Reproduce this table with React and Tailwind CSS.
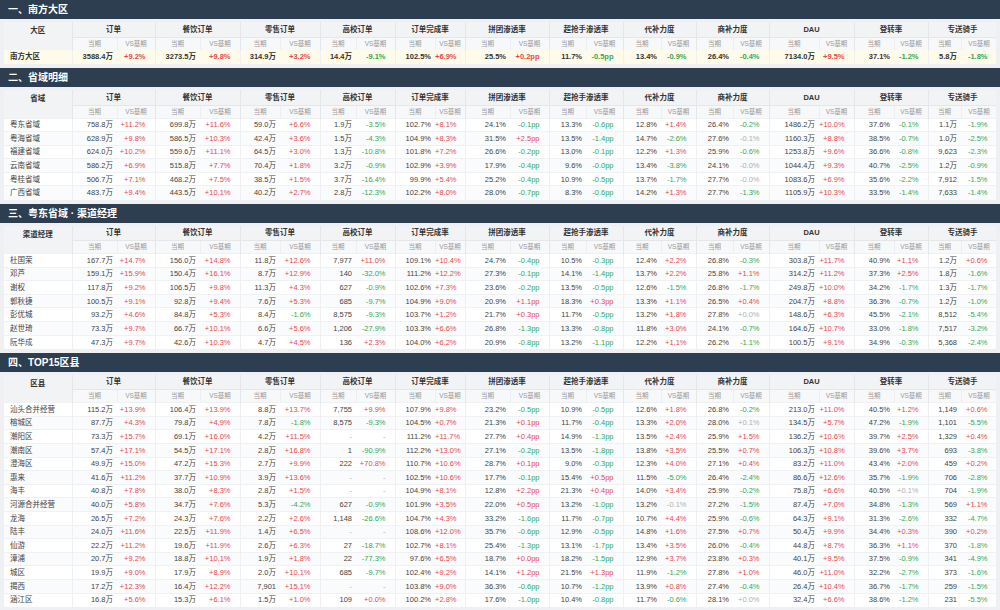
import React from 'react';

const GROUPS = [
  ['订单', 45, 38],
  ['餐饮订单', 45, 40],
  ['零售订单', 40, 40],
  ['高校订单', 36, 39],
  ['订单完成率', 40, 30],
  ['拼团渗透率', 45, 39],
  ['超抢手渗透率', 37, 37],
  ['代补力度', 38, 35],
  ['商补力度', 37, 36],
  ['DAU', 50, 35],
  ['登转率', 40, 34],
  ['专送骑手', 33, 36],
];

const parse = (s) => s.trim().split(/\s+/);

const REGION = [
  ['南方大区', parse('3588.4万 +9.2% 3273.5万 +9.8% 314.9万 +3.2% 14.4万 -9.1% 102.5% +6.9% 25.5% +0.2pp 11.7% -0.5pp 13.4% -0.9% 26.4% -0.4% 7134.0万 +9.5% 37.1% -1.2% 5.8万 -1.8%')],
];

const PROVINCES = [
  ['粤东省域', parse('758.8万 +11.2% 699.8万 +11.6% 59.0万 +6.6% 1.9万 -3.5% 102.7% +8.1% 24.1% -0.1pp 13.3% -0.6pp 12.8% +1.4% 26.4% -0.2% 1486.2万 +10.0% 37.6% -0.1% 1.1万 -1.9%')],
  ['粤海省域', parse('628.9万 +9.8% 586.5万 +10.3% 42.4万 +3.6% 1.5万 -4.3% 104.9% +8.3% 31.5% +2.5pp 13.5% -1.4pp 14.7% -2.6% 27.6% ~-0.1% 1160.3万 +8.8% 38.5% -0.7% 1.0万 -2.5%')],
  ['福建省域', parse('624.0万 +10.2% 559.6万 +11.1% 64.5万 +3.0% 1.3万 -10.8% 101.8% +7.2% 26.6% -0.2pp 13.0% -0.1pp 12.2% +1.3% 25.9% -0.6% 1253.8万 +9.6% 36.6% -0.8% 9,623 -2.3%')],
  ['云南省域', parse('586.2万 +6.9% 515.8万 +7.7% 70.4万 +1.8% 3.2万 -0.9% 102.9% +3.9% 17.9% -0.4pp 9.6% -0.0pp 13.4% -3.8% 24.1% ~-0.0% 1044.4万 +9.3% 40.7% -2.5% 1.2万 -0.9%')],
  ['粤桂省域', parse('506.7万 +7.1% 468.2万 +7.5% 38.5万 +1.5% 3.7万 -16.4% 99.9% +5.4% 25.2% -0.4pp 10.9% -0.5pp 13.7% -1.7% 27.7% ~-0.0% 1083.6万 +6.9% 35.6% -2.2% 7,912 -1.5%')],
  ['广西省域', parse('483.7万 +9.4% 443.5万 +10.1% 40.2万 +2.7% 2.8万 -12.3% 102.2% +8.0% 28.0% -0.7pp 8.3% -0.6pp 14.2% +1.3% 27.7% -1.3% 1105.9万 +10.3% 33.5% -1.4% 7,633 -1.4%')],
];

const MANAGERS = [
  ['杜国荣', parse('167.7万 +14.7% 156.0万 +14.8% 11.8万 +12.6% 7,977 +11.0% 109.1% +10.4% 24.7% -0.4pp 10.5% -0.3pp 12.4% +2.2% 26.8% -0.3% 303.8万 +11.7% 40.9% +1.1% 1.2万 +0.6%')],
  ['邓芦', parse('159.1万 +15.9% 150.4万 +16.1% 8.7万 +12.9% 140 -32.0% 111.2% +12.2% 27.3% -0.1pp 14.1% -1.4pp 13.7% +2.2% 25.8% +1.1% 314.2万 +11.2% 37.3% +2.5% 1.8万 -1.6%')],
  ['谢权', parse('117.8万 +9.2% 106.5万 +9.8% 11.3万 +4.3% 627 -0.9% 102.6% +7.3% 23.6% -0.2pp 13.5% -0.5pp 12.6% -1.5% 26.8% -1.7% 249.8万 +10.0% 34.2% -1.7% 1.3万 -1.7%')],
  ['郭秋捷', parse('100.5万 +9.1% 92.8万 +9.4% 7.6万 +5.3% 685 -9.7% 104.9% +9.0% 20.9% +1.1pp 18.3% +0.3pp 13.3% +1.1% 26.5% +0.4% 204.7万 +8.8% 36.3% -0.7% 1.2万 -1.0%')],
  ['彭优城', parse('93.2万 +4.6% 84.8万 +5.3% 8.4万 -1.6% 8,575 -9.3% 103.7% +1.2% 21.7% +0.3pp 11.7% -0.5pp 13.2% +1.8% 27.8% ~+0.0% 148.6万 +6.3% 45.5% -2.1% 8,512 -5.4%')],
  ['赵世琦', parse('73.3万 +9.7% 66.7万 +10.1% 6.6万 +5.6% 1,206 -27.9% 103.3% +6.6% 26.8% -1.3pp 13.3% -0.8pp 11.8% +3.0% 24.1% -0.7% 164.6万 +10.7% 33.0% -1.8% 7,517 -3.2%')],
  ['阮华成', parse('47.3万 +9.7% 42.6万 +10.3% 4.7万 +4.5% 136 +2.3% 104.0% +6.2% 20.9% -0.8pp 13.2% -1.1pp 12.2% +1.1% 26.2% -1.1% 100.5万 +9.1% 34.9% -0.3% 5,368 -2.4%')],
];

const COUNTIES = [
  ['汕头合并经营', parse('115.2万 +13.9% 106.4万 +13.9% 8.8万 +13.7% 7,755 +9.9% 107.9% +9.8% 23.2% -0.5pp 10.9% -0.5pp 12.6% +1.8% 26.8% -0.2% 213.0万 +11.0% 40.5% +1.2% 1,149 +0.6%')],
  ['榕城区', parse('87.7万 +4.3% 79.8万 +4.9% 7.8万 -1.8% 8,575 -9.3% 104.5% +0.7% 21.3% +0.1pp 11.7% -0.4pp 13.3% +2.0% 28.0% ~+0.1% 134.5万 +5.7% 47.2% -1.9% 1,101 -5.5%')],
  ['潮阳区', parse('73.3万 +15.7% 69.1万 +16.0% 4.2万 +11.5% - - 111.2% +11.7% 27.7% +0.4pp 14.9% -1.3pp 13.5% +2.4% 25.9% +1.5% 136.2万 +10.6% 39.7% +2.5% 1,329 +0.4%')],
  ['潮南区', parse('57.4万 +17.1% 54.5万 +17.1% 2.8万 +16.8% 1 -90.9% 112.2% +13.0% 27.1% -0.2pp 13.5% -1.8pp 13.8% +3.5% 25.5% +0.7% 106.3万 +10.8% 39.6% +3.7% 693 -3.8%')],
  ['澄海区', parse('49.9万 +15.0% 47.2万 +15.3% 2.7万 +9.9% 222 +70.8% 110.7% +10.6% 28.7% +0.1pp 9.0% -0.3pp 12.3% +4.0% 27.1% +0.4% 83.2万 +11.0% 43.4% +2.0% 459 +0.2%')],
  ['惠来', parse('41.6万 +11.2% 37.7万 +10.9% 3.9万 +13.6% - - 102.5% +10.6% 17.7% -0.1pp 15.4% +0.5pp 11.5% -5.0% 26.4% -2.4% 86.6万 +12.6% 35.7% -1.9% 706 -2.8%')],
  ['海丰', parse('40.8万 +7.8% 38.0万 +8.3% 2.8万 +1.5% - - 104.9% +8.1% 12.8% +2.2pp 21.3% +0.4pp 14.0% +3.4% 25.9% -0.2% 75.8万 +6.6% 40.5% ~+0.1% 704 -1.9%')],
  ['河源合并经营', parse('40.0万 +5.8% 34.7万 +7.6% 5.3万 -4.2% 627 -0.9% 101.9% +3.5% 22.0% +0.5pp 13.2% -1.0pp 13.2% ~-0.1% 27.2% -1.5% 87.4万 +7.0% 34.8% -1.3% 569 +1.1%')],
  ['龙海', parse('26.5万 +7.2% 24.3万 +7.6% 2.2万 +2.6% 1,148 -26.6% 104.7% +4.3% 33.2% -1.6pp 11.7% -0.7pp 10.7% +4.4% 25.9% -0.6% 64.3万 +9.1% 31.3% -2.6% 332 -4.7%')],
  ['陆丰', parse('24.0万 +11.6% 22.5万 +11.9% 1.4万 +6.5% - - 108.6% +12.0% 35.7% -0.6pp 12.9% -0.5pp 14.8% +1.6% 27.5% +0.7% 50.4万 +9.9% 34.4% +0.3% 390 +0.2%')],
  ['仙游', parse('22.2万 +11.2% 19.6万 +11.9% 2.6万 +6.3% 27 -18.7% 102.7% +8.1% 25.4% -1.3pp 13.1% -1.7pp 13.4% +3.5% 26.0% -0.4% 44.8万 +8.7% 36.3% +1.1% 370 -1.8%')],
  ['漳浦', parse('20.7万 +9.2% 18.8万 +10.1% 1.9万 +1.8% 22 -77.3% 97.6% +6.5% 18.7% +0.0pp 18.2% -1.5pp 12.9% +3.7% 23.8% +0.3% 40.1万 +9.5% 37.5% -0.9% 341 -4.9%')],
  ['城区', parse('19.9万 +9.0% 17.9万 +8.9% 2.0万 +10.1% 685 -9.7% 102.4% +9.2% 14.1% +1.2pp 21.5% +1.3pp 11.9% -1.2% 27.8% +1.0% 46.0万 +11.0% 32.2% -2.7% 373 -1.6%')],
  ['揭西', parse('17.2万 +12.3% 16.4万 +12.2% 7,901 +15.1% - - 103.8% +9.0% 36.3% -0.6pp 10.7% -1.2pp 13.9% +0.8% 27.4% -0.4% 26.4万 +10.4% 36.7% -1.7% 259 -1.5%')],
  ['涵江区', parse('16.8万 +5.6% 15.3万 +6.1% 1.5万 +1.0% 109 +0.0% 100.2% +2.8% 17.6% -1.0pp 10.4% -0.8pp 11.7% -0.6% 28.1% ~+0.0% 32.4万 +6.6% 38.6% -1.2% 231 -5.5%')],
];

function deltaClass(v) {
  if (v === '-' || v.startsWith('~')) return 'text-[#b0b0b0]';
  if (v.startsWith('+')) return 'text-[#e5484d]';
  return 'text-[#34a853]';
}

function DataTable({ label, rows, highlight }) {
  return (
    <div className="mx-[4px] mt-[3px] mb-[4px] bg-white rounded-[2px] overflow-hidden">
      <table className="w-full table-fixed border-collapse text-[7.5px] text-[#444]">
        <colgroup>
          <col style={{ width: 68 }} />
          {GROUPS.map(([name, a, b]) => (
            <React.Fragment key={name}>
              <col style={{ width: a }} />
              <col style={{ width: b }} />
            </React.Fragment>
          ))}
        </colgroup>
        <thead>
          <tr className="h-[15px] bg-[#f2f3f5] text-[#333]">
            <th rowSpan={2} className="font-bold text-center align-top pt-[3px] border-r border-[#e4e6ea]">{label}</th>
            {GROUPS.map(([name]) => (
              <th key={name} colSpan={2} className="font-bold text-center border-r border-b border-[#e4e6ea]">{name}</th>
            ))}
          </tr>
          <tr className="h-[13px] bg-[#f7f8fa] text-[6.5px] text-[#9a9a9a]">
            {GROUPS.map(([name]) => (
              <React.Fragment key={name}>
                <th className="font-normal text-center border-r border-[#eceef1]">当期</th>
                <th className="font-normal text-center border-r border-[#e4e6ea]">VS基期</th>
              </React.Fragment>
            ))}
          </tr>
        </thead>
        <tbody>
          {rows.map(([name, vals]) => (
            <tr
              key={name}
              className={highlight ? 'h-[14px] bg-[#fffbea] font-bold text-[#333]' : 'h-[13.6px] border-t border-[#f0f1f3] even:bg-[#fafbfc]'}
            >
              <td className="pl-[6px] text-left whitespace-nowrap border-r border-[#eef0f2]">{name}</td>
              {GROUPS.map(([g], i) => {
                const cur = vals[i * 2];
                const vs = vals[i * 2 + 1];
                return (
                  <React.Fragment key={g}>
                    <td className={`text-right pr-[4px] whitespace-nowrap ${cur === '-' ? 'text-[#b0b0b0]' : ''}`}>{cur}</td>
                    <td className={`text-right pr-[9px] whitespace-nowrap border-r border-[#eef0f2] ${deltaClass(vs)}`}>
                      {vs.replace('~', '')}
                    </td>
                  </React.Fragment>
                );
              })}
            </tr>
          ))}
        </tbody>
      </table>
    </div>
  );
}

function Section({ title, children }) {
  return (
    <section>
      <div className="h-[19px] bg-[#2c3e50] flex items-center px-[8px]">
        <h2 className="text-white text-[10px] font-bold">{title}</h2>
      </div>
      {children}
    </section>
  );
}

export default function App() {
  return (
    <div
      className="min-h-screen bg-[#eef0f3] w-[1000px]"
      style={{ fontFamily: '"Liberation Sans", "Noto Sans CJK SC", sans-serif' }}
    >
      <Section title="一、南方大区">
        <DataTable label="大区" rows={REGION} highlight />
      </Section>
      <Section title="二、省域明细">
        <DataTable label="省域" rows={PROVINCES} />
      </Section>
      <Section title="三、粤东省域 · 渠道经理">
        <DataTable label="渠道经理" rows={MANAGERS} />
      </Section>
      <Section title="四、TOP15区县">
        <DataTable label="区县" rows={COUNTIES} />
      </Section>
    </div>
  );
}
